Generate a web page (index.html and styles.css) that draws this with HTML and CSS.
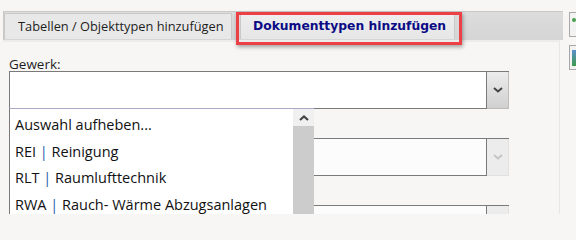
FILE: index.html
```html
<!DOCTYPE html>
<html lang="de">
<head>
<meta charset="utf-8">
<title>Dokumenttypen hinzufügen</title>
<link rel="stylesheet" href="styles.css">
</head>
<body>
<div class="window">
  <div class="main">
    <div class="tabstrip">
      <div class="tab">Tabellen / Objekttypen hinzufügen</div>
      <div class="tab tab-active">Dokumenttypen hinzufügen<span class="highlight"></span></div>
    </div>
    <div class="panel">
      <div class="label">Gewerk:</div>
      <div class="combo">
        <div class="combo-input"></div>
        <div class="combo-btn"><svg width="10" height="6" viewBox="0 0 10 6"><path d="M1 1 L5 4.5 L9 1" fill="none" stroke="#444" stroke-width="2"/></svg></div>
      </div>
      <div class="combo combo-disabled spaced">
        <div class="combo-input"></div>
        <div class="combo-btn"><svg width="10" height="6" viewBox="0 0 10 6"><path d="M1 1 L5 4.5 L9 1" fill="none" stroke="#c4c4c4" stroke-width="2"/></svg></div>
      </div>
      <div class="combo combo-disabled spaced">
        <div class="combo-input"></div>
        <div class="combo-btn"></div>
      </div>
      <div class="dropdown">
        <ul class="list">
          <li>Auswahl aufheben...</li>
          <li>REI <span class="sep">|</span> Reinigung</li>
          <li>RLT <span class="sep">|</span> Raumlufttechnik</li>
          <li>RWA <span class="sep">|</span> Rauch- Wärme Abzugsanlagen</li>
        </ul>
        <div class="scrollbar">
          <div class="scroll-up"><svg width="10" height="6" viewBox="0 0 10 6"><path d="M1 5 L5 1.5 L9 5" fill="none" stroke="#444" stroke-width="2.2"/></svg></div>
          <div class="scroll-track"></div>
        </div>
      </div>
    </div>
  </div>
  <div class="side">
    <div class="side-btn"><span class="dot"></span></div>
    <div class="side-btn"><span class="bar"></span></div>
  </div>
</div>
</body>
</html>
```
FILE: styles.css
```css
html, body {
  margin: 0;
  padding: 0;
  background: #f7f6f5;
  width: 576px;
  height: 214px;
  overflow: hidden;
}
.window {
  display: flex;
  padding-top: 11px;
  height: 203px;
  overflow: hidden;
  font-family: "Open Sans", "Noto Sans", sans-serif;
  color: #1e1e1e;
}
.main {
  flex-shrink: 0;
  margin-left: 3px;
  width: 560px;
}
.tabstrip {
  height: 28px;
  border-top: 1px solid #c9c9c9;
  border-left: 1px solid #c9c9c9;
  background: linear-gradient(#dcdcdc, #d5d5d5);
  display: flex;
  align-items: flex-end;
}
.tab {
  position: relative;
  height: 26px;
  box-sizing: border-box;
  padding: 0 8px 0 13px;
  margin-top: 1px;
  align-self: flex-start;
  background: #e8e8e8;
  border: 1px solid #c9c9c9;
  border-bottom: none;
  font-size: 12.8px;
  line-height: 25px;
  width: 228px;
  white-space: nowrap;
}
.tab-active {
  margin-left: 8px;
  width: 215px;
  padding-left: 12px;
  background: linear-gradient(#eeeeee, #e6e6e6);
  font-family: "DejaVu Sans", sans-serif;
  font-weight: bold;
  font-size: 12.3px;
  color: #0b0b86;
}
.highlight {
  position: absolute;
  z-index: 5;
  left: -5px;
  top: -2px;
  width: 226px;
  height: 33px;
  box-sizing: border-box;
  border: 3px solid #ec3f46;
  box-shadow: 1px 2px 4px rgba(0,0,0,0.35);
}
.panel {
  position: relative;
  height: 172px;
  overflow: hidden;
  border-top: 2px solid #ececec;
  border-right: 1px solid #e6e6e6;
  padding: 15px 0 0 6px;
  margin-right: 3px;
  background: #f7f6f5;
}
.label {
  font-size: 13.5px;
  line-height: 15px;
  height: 14px;
}
.combo {
  display: flex;
  width: 500px;
  height: 38px;
  box-sizing: border-box;
  border-top: 1px solid #7a7a7a;
}
.combo.spaced {
  margin-top: 29px;
}
.combo-input {
  flex: 1;
  background: #ffffff;
  border-left: 1px solid #7a7a7a;
  border-bottom: 1px solid #7a7a7a;
  border-right: 1px solid #7a7a7a;
}
.combo-btn {
  width: 21px;
  background: linear-gradient(#ececec, #d0d0d0);
  border-bottom: 1px solid #bcbcbc;
  border-right: 1px solid #bcbcbc;
  display: flex;
  align-items: center;
  justify-content: center;
}
.combo-disabled .combo-input {
  background: #fcfcfc;
}
.combo-disabled .combo-btn {
  background: #ececec;
  border-color: #e0e0e0;
}
.dropdown {
  position: absolute;
  left: 6px;
  top: 66px;
  width: 304px;
  height: 110px;
  display: flex;
  background: #ffffff;
  border-top: 1px solid #a9a9c4;
  border-left: 1px solid #7a7a7a;
}
.list {
  flex: 1;
  list-style: none;
  margin: 0;
  padding: 3px 0 0 5px;
  font-size: 14.5px;
  color: #111111;
}
.list li {
  height: 26.7px;
  line-height: 26px;
  white-space: nowrap;
}
.sep {
  color: #1b5fa8;
}
.scrollbar {
  width: 21px;
  display: flex;
  flex-direction: column;
}
.scroll-up {
  height: 17px;
  background: #f0f0f0;
  display: flex;
  align-items: center;
  justify-content: center;
}
.scroll-track {
  flex: 1;
  background: #cccccc;
}
.side {
  flex-shrink: 0;
  margin-left: 6px;
  padding-top: 1px;
  display: flex;
  flex-direction: column;
  gap: 8px;
}
.side-btn {
  width: 20px;
  height: 25px;
  box-sizing: border-box;
  border: 1px solid #a8a8a8;
  background: #f2f2f2;
  position: relative;
}
.dot {
  position: absolute;
  left: 2px;
  top: 5px;
  width: 4px;
  height: 4px;
  border-radius: 50%;
  background: #4aa050;
}
.bar {
  position: absolute;
  left: 2px;
  top: 4px;
  width: 4px;
  height: 16px;
  background: linear-gradient(#5a8fd0, #3e9a4a);
}
```
